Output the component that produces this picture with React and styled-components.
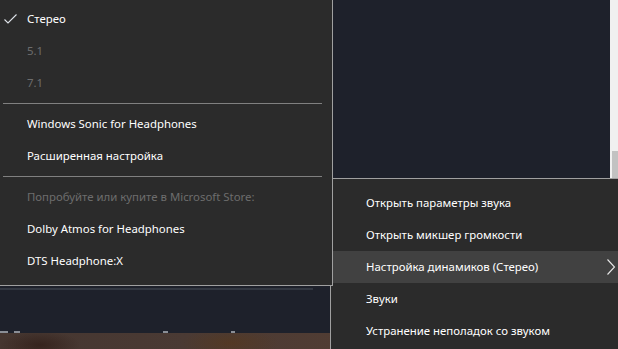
import React from "react";
import styled, { createGlobalStyle } from "styled-components";

const Global = createGlobalStyle`
  html, body { margin: 0; padding: 0; background: #1e212b; overflow: hidden; }
  * { box-sizing: border-box; }
`;

const Desktop = styled.div`
  position: relative;
  width: 618px;
  height: 349px;
  display: grid;
  grid-template-rows: 178px 1fr;
  background: #1e212b;
  overflow: hidden;
  font-family: "Segoe UI", "Noto Sans", sans-serif;
  font-size: 11.4px;
`;

const TopPane = styled.div`
  display: grid;
  grid-template-columns: 1fr 8px;
`;

const Canvas = styled.div`
  background: #1e212b;
`;

const Scrollbar = styled.div`
  background: #f0f0f0;
  display: flex;
  flex-direction: column;
  justify-content: flex-end;
  align-items: flex-end;
`;

const Thumb = styled.div`
  width: 6px;
  height: 27px;
  background: #c2c2c2;
`;

const BottomPane = styled.div`
  display: flex;
  flex-direction: column;
  background: #1e212b;
`;

const Rule = styled.div`
  margin-top: 110px;
  width: 313px;
  height: 2px;
  background: #333842;
`;

const Spacer = styled.div`
  flex: 1;
`;

const Marks = styled.div`
  display: flex;
  align-items: flex-end;
  height: 3px;
`;

const Mark = styled.span`
  display: block;
  height: 2px;
  width: ${(p) => p.$w}px;
  margin-left: ${(p) => p.$m}px;
  background: #8a8e96;
`;

const Photo = styled.div`
  height: 16px;
  background:
    radial-gradient(ellipse 40px 14px at 40px 12px, rgba(40, 20, 14, 0.55), transparent),
    radial-gradient(ellipse 50px 14px at 230px 10px, rgba(90, 55, 20, 0.5), transparent),
    linear-gradient(90deg, #453630 0%, #4a3a34 30%, #523d33 60%, #5a4a32 85%, #5c5035 100%);
`;

const Menu = styled.div`
  position: absolute;
  background: #2b2b2b;
  color: #ffffff;
  border-color: #a0a0a0;
  border-style: solid;
`;

const LeftMenu = styled(Menu)`
  left: 0;
  top: 0;
  width: 333px;
  height: 286px;
  border-width: 0 1px 1px 0;
  padding-top: 3px;
`;

const RightMenu = styled(Menu)`
  left: 330px;
  top: 178px;
  right: 0;
  bottom: 0;
  border-width: 1px 0 0 1px;
  padding-top: 8px;
`;

const Item = styled.div`
  position: relative;
  height: 32px;
  display: flex;
  align-items: center;
  padding-left: ${(p) => p.$indent}px;
  padding-bottom: 2px;
  color: ${(p) => (p.$disabled ? "#6d6d6d" : "#ffffff")};
  background: ${(p) => (p.$active ? "#414141" : "transparent")};
  white-space: nowrap;
`;

const Separator = styled.div`
  height: 9px;
  display: flex;
  align-items: center;
  padding: 0 10px 0 3px;
  &::after {
    content: "";
    flex: 1;
    height: 1px;
    background: #808080;
  }
`;

const CheckIcon = styled.svg`
  position: absolute;
  left: 3px;
  top: 10px;
`;

const Chevron = styled.svg`
  position: absolute;
  right: 2px;
  top: 7px;
`;

const Check = () => (
  <CheckIcon width="16" height="12" viewBox="0 0 16 12">
    <path d="M1.5 6.5 L5 10 L13.5 1.5" fill="none" stroke="#dfe3ea" strokeWidth="1.1" />
  </CheckIcon>
);

const Arrow = () => (
  <Chevron width="10" height="18" viewBox="0 0 10 18">
    <path d="M1.5 1.5 L8.5 9 L1.5 16.5" fill="none" stroke="#e8e8e8" strokeWidth="1.1" />
  </Chevron>
);

export default function App() {
  return (
    <>
      <Global />
      <Desktop>
        <TopPane>
          <Canvas />
          <Scrollbar>
            <Thumb />
          </Scrollbar>
        </TopPane>
        <BottomPane>
          <Rule />
          <Spacer />
          <Marks>
            <Mark $w={8} $m={0} />
            <Mark $w={6} $m={6} />
            <Mark $w={5} $m={143} />
            <Mark $w={4} $m={63} />
          </Marks>
          <Photo />
        </BottomPane>

        <RightMenu>
          <Item $indent={35}>Открыть параметры звука</Item>
          <Item $indent={35}>Открыть микшер громкости</Item>
          <Item $indent={35} $active>
            Настройка динамиков (Стерео)
            <Arrow />
          </Item>
          <Item $indent={35}>Звуки</Item>
          <Item $indent={35}>Устранение неполадок со звуком</Item>
        </RightMenu>

        <LeftMenu>
          <Item $indent={27}>
            <Check />
            Стерео
          </Item>
          <Item $indent={27} $disabled>5.1</Item>
          <Item $indent={27} $disabled>7.1</Item>
          <Separator />
          <Item $indent={27}>Windows Sonic for Headphones</Item>
          <Item $indent={27}>Расширенная настройка</Item>
          <Separator />
          <Item $indent={27} $disabled>Попробуйте или купите в Microsoft Store:</Item>
          <Item $indent={27}>Dolby Atmos for Headphones</Item>
          <Item $indent={27}>DTS Headphone:X</Item>
        </LeftMenu>
      </Desktop>
    </>
  );
}
